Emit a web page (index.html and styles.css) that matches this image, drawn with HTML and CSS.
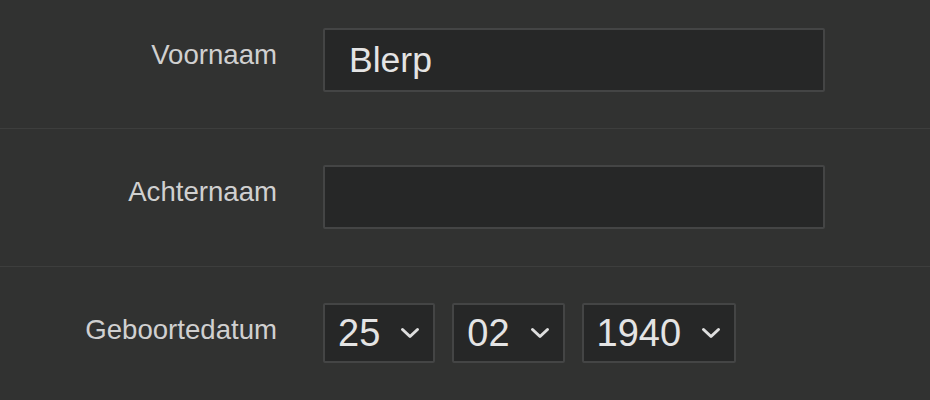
FILE: index.html
```html
<!DOCTYPE html>
<html lang="nl">
<head>
<meta charset="utf-8">
<title>Formulier</title>
<link rel="stylesheet" href="styles.css">
</head>
<body>
<form class="form">
  <div class="row row-first">
    <label class="label" for="voornaam">Voornaam</label>
    <div class="control"><input class="text-input" id="voornaam" type="text" value="Blerp"></div>
  </div>
  <div class="row">
    <label class="label" for="achternaam">Achternaam</label>
    <div class="control"><input class="text-input" id="achternaam" type="text" value=""></div>
  </div>
  <div class="row">
    <span class="label">Geboortedatum</span>
    <div class="control date">
      <div class="select"><span class="select-value">25</span><svg class="chev" width="20" height="12" viewBox="0 0 20 12"><path d="M2.5 2.5 L10 9.5 L17.5 2.5" fill="none" stroke="currentColor" stroke-width="3" stroke-linecap="round" stroke-linejoin="round"/></svg></div>
      <div class="select"><span class="select-value">02</span><svg class="chev" width="20" height="12" viewBox="0 0 20 12"><path d="M2.5 2.5 L10 9.5 L17.5 2.5" fill="none" stroke="currentColor" stroke-width="3" stroke-linecap="round" stroke-linejoin="round"/></svg></div>
      <div class="select"><span class="select-value">1940</span><svg class="chev" width="20" height="12" viewBox="0 0 20 12"><path d="M2.5 2.5 L10 9.5 L17.5 2.5" fill="none" stroke="currentColor" stroke-width="3" stroke-linecap="round" stroke-linejoin="round"/></svg></div>
    </div>
  </div>
</form>
</body>
</html>
```
FILE: styles.css
```css
html, body {
  margin: 0;
  padding: 0;
  background: #313231;
}
body {
  font-family: "Liberation Sans", Arial, sans-serif;
  color: #d2d2d2;
  height: 400px;
  overflow: hidden;
}
.form {
  display: flex;
  flex-direction: column;
}
.row {
  display: flex;
  align-items: flex-start;
  gap: 46px;
  padding: 36px 0 37px 0;
  border-bottom: 1px solid #3d3e3d;
}
.row-first {
  padding-top: 28px;
  padding-bottom: 36px;
}
.label {
  width: 277px;
  flex: none;
  text-align: right;
  font-size: 27.6px;
  line-height: 32px;
  padding-top: 11px;
  color: #d0d0d0;
}
.control {
  display: flex;
}
.text-input {
  box-sizing: border-box;
  width: 502px;
  height: 64px;
  margin: 0;
  padding: 0 24px;
  background: #262727;
  border: 2px solid #444545;
  border-radius: 2px;
  color: #e4e4e4;
  font-family: "Liberation Sans", Arial, sans-serif;
  font-size: 35.5px;
  outline: none;
}
.date {
  gap: 17px;
}
.select {
  box-sizing: border-box;
  height: 60px;
  display: flex;
  align-items: center;
  gap: 20px;
  padding: 0 13px 0 13px;
  background: #262727;
  border: 2px solid #444545;
  border-radius: 2px;
  color: #e4e4e4;
}
.select-value {
  font-size: 38px;
  line-height: 44px;
}
.chev {
  display: block;
  color: #dedede;
}
```
